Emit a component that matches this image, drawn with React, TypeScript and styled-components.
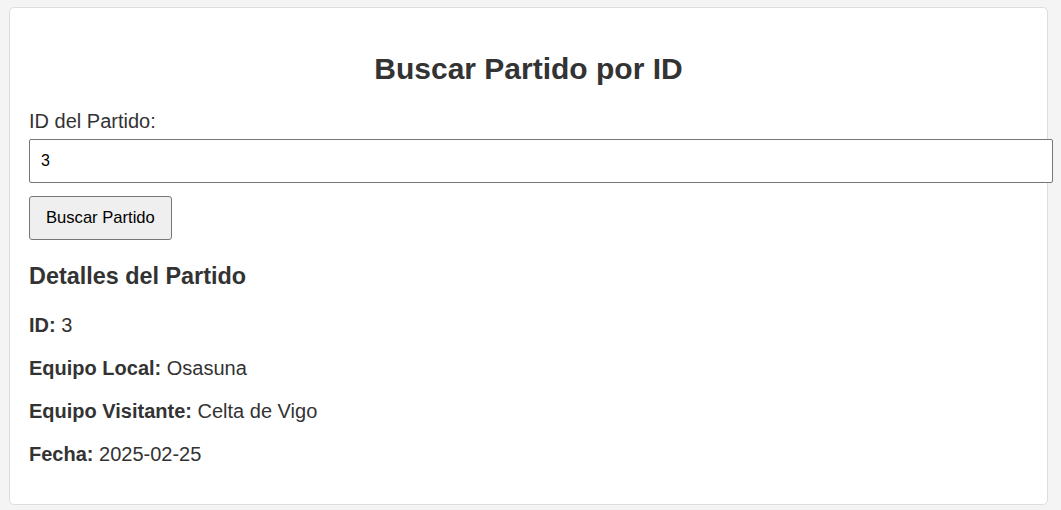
import React from "react";
import styled, { createGlobalStyle } from "styled-components";

const GlobalStyle = createGlobalStyle`
  html, body {
    margin: 0;
    padding: 0;
    background: #f4f4f4;
    font-family: "Liberation Sans", Arial, sans-serif;
    color: #333;
  }
`;

const Page = styled.div`
  padding: 7px 0 0 9px;
`;

const Card = styled.div`
  box-sizing: border-box;
  width: 1039px;
  background: #ffffff;
  border: 1px solid #dddddd;
  border-radius: 5px;
  padding: 19px 19px 18px 19px;
`;

const Title = styled.h2`
  margin: 25px 0 24px;
  font-size: 30px;
  line-height: 34px;
  font-weight: bold;
  text-align: center;
  color: #333;
`;

const Label = styled.label`
  display: block;
  font-size: 20px;
  line-height: 23px;
  margin-bottom: 6px;
  color: #333;
`;

const Input = styled.input`
  display: block;
  box-sizing: content-box;
  width: 100%;
  margin: 0;
  padding: 12px 12px 12px 11px;
  font-family: "Liberation Sans", Arial, sans-serif;
  font-size: 16px;
  line-height: 18px;
  height: 18px;
  color: #000;
  background: #fff;
  border: 1px solid #767676;
  border-radius: 2px;
  outline: none;
`;

const Button = styled.button`
  display: block;
  margin-top: 13px;
  padding: 0 16px;
  height: 44px;
  font-family: "Liberation Sans", Arial, sans-serif;
  font-size: 16.6px;
  color: #000;
  background: #efefef;
  border: 1px solid #767676;
  border-radius: 3px;
  cursor: pointer;
`;

const SubTitle = styled.h3`
  margin: 23px 0 24.4px;
  font-size: 23.4px;
  font-weight: bold;
  color: #333;
`;

const Detail = styled.p`
  margin: 20px 0;
  font-size: 20px;
  line-height: 23px;
  color: #333;
`;

const details = [
  { label: "ID:", value: "3" },
  { label: "Equipo Local:", value: "Osasuna" },
  { label: "Equipo Visitante:", value: "Celta de Vigo" },
  { label: "Fecha:", value: "2025-02-25" },
];

export default function App() {
  return (
    <>
      <GlobalStyle />
      <Page>
        <Card>
          <Title>Buscar Partido por ID</Title>
          <Label htmlFor="partidoId">ID del Partido:</Label>
          <Input id="partidoId" type="text" defaultValue="3" />
          <Button type="button">Buscar Partido</Button>
          <SubTitle>Detalles del Partido</SubTitle>
          {details.map((d) => (
            <Detail key={d.label}>
              <strong>{d.label}</strong> {d.value}
            </Detail>
          ))}
        </Card>
      </Page>
    </>
  );
}
